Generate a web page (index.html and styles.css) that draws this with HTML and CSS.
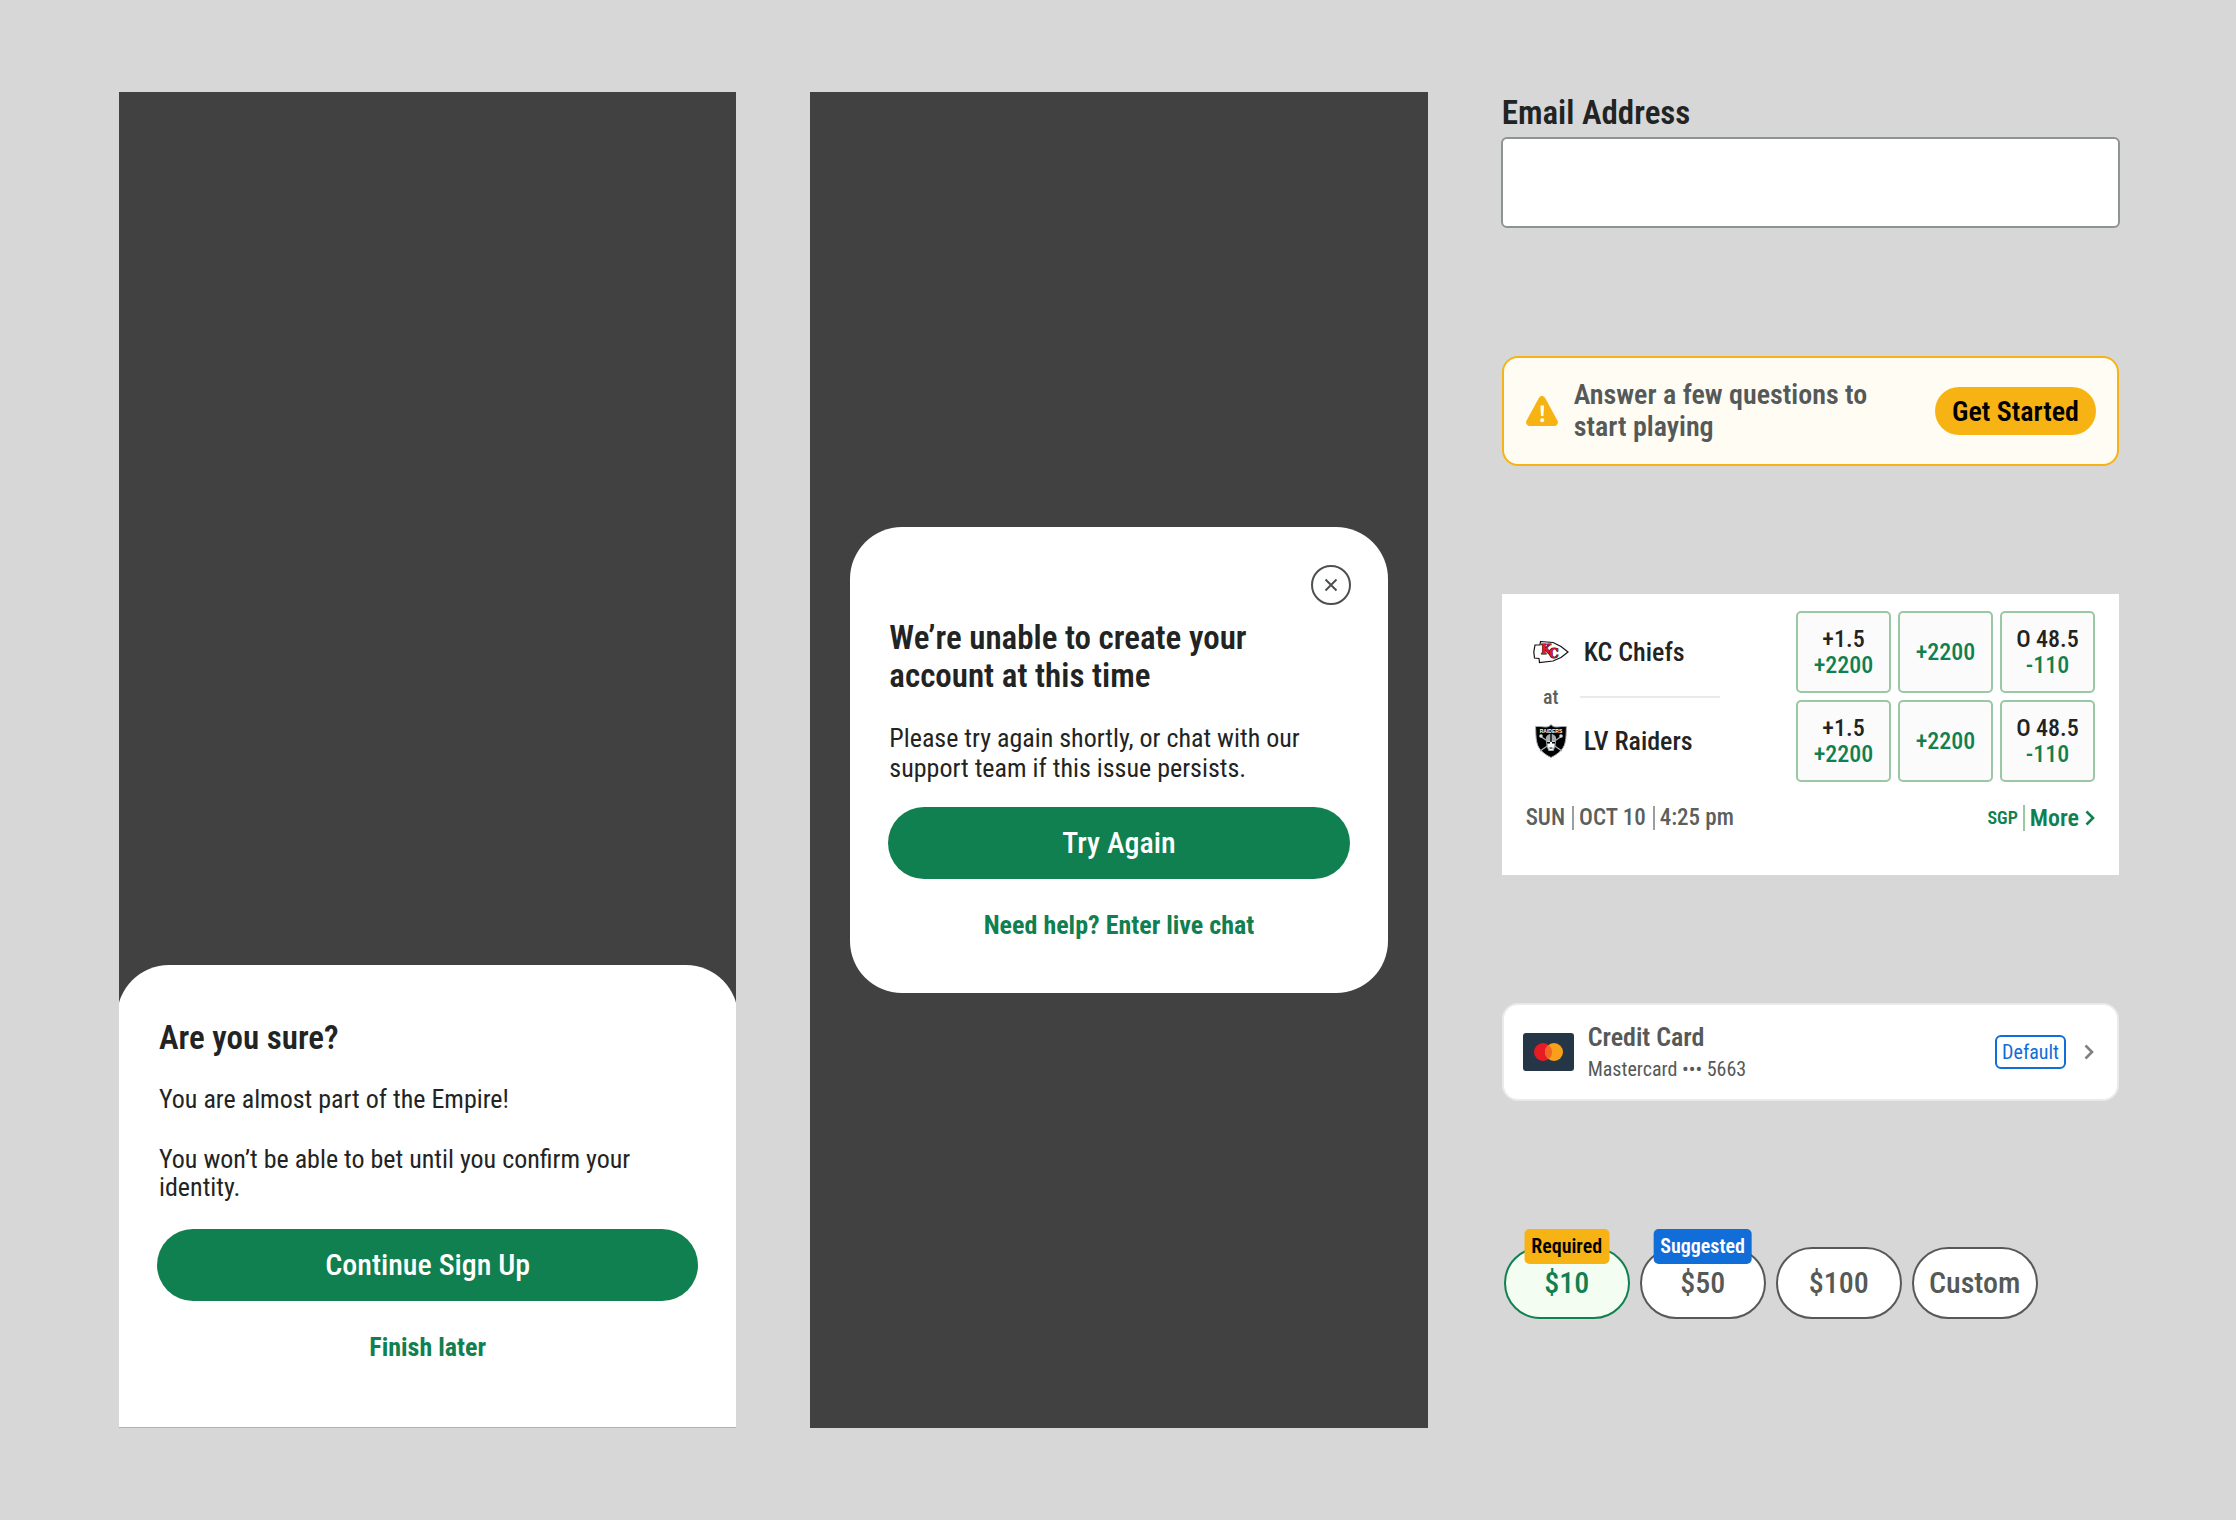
FILE: index.html
```html
<!DOCTYPE html>
<html lang="en">
<head>
  <meta charset="UTF-8">
  <meta name="viewport" content="width=device-width, initial-scale=1.0">
  <title>Sportsbook Components</title>
  <link rel="stylesheet" href="styles.css">
</head>
<body>
  <main class="board">

    <!-- Bottom sheet -->
    <section class="screen screen-bottom">
      <div class="sheet">
        <h2 class="title">Are you sure?</h2>
        <p>You are almost part of the Empire!</p>
        <p>You won’t be able to bet until you confirm your identity.</p>
        <button type="button" class="button">Continue Sign Up</button>
        <a href="#" class="text-link">Finish later</a>
      </div>
    </section>

    <!-- Modal -->
    <section class="screen screen-center">
      <div class="modal">
        <button type="button" class="close-btn" aria-label="Close">
          <svg width="14" height="14" viewBox="0 0 14 14" fill="none" stroke="#4c504e" stroke-width="2">
            <path d="M1.5 1.5l11 11M12.5 1.5l-11 11"/>
          </svg>
        </button>
        <h2 class="title">We’re unable to create your account at this time</h2>
        <p>Please try again shortly, or chat with our support team if this issue persists.</p>
        <button type="button" class="button">Try Again</button>
        <a href="#" class="text-link">Need help? Enter live chat</a>
      </div>
    </section>

    <!-- Components -->
    <section class="components">
      <div class="field">
        <label for="email" class="title">Email Address</label>
        <input type="email" id="email">
      </div>

      <div class="alert">
        <svg width="32" height="30" viewBox="0 0 32 30">
          <path d="M13 1.8c1.4-2.4 4.6-2.4 6 0l12.400 22.600c1.300 2.400-.2 5.600-3 5.600H3.600c-2.800 0-4.300-3.200-3-5.600z" fill="#f7b314"/>
          <path d="M14.400 9.500h3.600l-.6 10.500h-2.400z" fill="#fff"/>
          <circle cx="16.200" cy="24.200" r="2" fill="#fff"/>
        </svg>
        <p>Answer a few questions to start playing</p>
        <button type="button" class="alert-btn">Get Started</button>
      </div>

      <div class="game">
        <div class="game-main">
          <div class="teams">
            <svg class="logo" width="36" height="24" viewBox="0 0 36 24">
              <path d="M7.500 1.500L20 2.500 28 6.500 35 12 28 17.500 20 21 6.500 22.500 6 18.500 1.500 18 .8 12 2 5 7 5z" fill="#fff" stroke="#111" stroke-width="1.200"/>
              <text x="8" y="14" class="kc kc-back">K</text>
              <text x="8" y="14" class="kc">K</text>
              <text x="16" y="18" class="kc kc-back">C</text>
              <text x="16" y="18" class="kc">C</text>
            </svg>
            <span class="team">KC Chiefs</span>
            <span class="at">at</span>
            <span class="rule"></span>
            <svg class="logo" width="32" height="34" viewBox="0 0 32 34">
              <path d="M16 .5c1 1.600 3 2.500 5 2.500 3 0 6-.8 10.500-.5C31 8 31.500 13 30 19c-1.500 6.500-7 11-14 14.500C9 30 3.500 25.500 2 19 .5 13 1 8 .5 2.500 5 2.200 8 3 11 3c2 0 4-.9 5-2.500z" fill="#000" stroke="#a5acaf" stroke-width="1"/>
              <text x="16" y="9" class="raiders">RAIDERS</text>
              <path d="M5 12l22 15M27 12L5 27" stroke="#a5acaf" stroke-width="1.400"/>
              <circle cx="6" cy="12" r="1.800" fill="#d8dcde"/>
              <circle cx="26" cy="12" r="1.800" fill="#d8dcde"/>
              <path d="M11 17c-1-5 2-7 5-7s6 2 5 7l-.5 5-2 5h-5l-2-5z" fill="#a5acaf"/>
              <path d="M12.500 17.500h7l-.5 5-1.500 3.500h-3L13 22.500z" fill="#fff"/>
              <path d="M15.300 10h1.400v8h-1.400zM12 18h3v1.600h-3zM17 18h3v1.600h-3zM14.500 23.500h3v.9h-3z" fill="#000"/>
            </svg>
            <span class="team">LV Raiders</span>
          </div>
          <div class="odds">
            <button type="button" class="odd"><span>+1.5</span>+2200</button>
            <button type="button" class="odd">+2200</button>
            <button type="button" class="odd"><span>O 48.5</span>-110</button>
            <button type="button" class="odd"><span>+1.5</span>+2200</button>
            <button type="button" class="odd">+2200</button>
            <button type="button" class="odd"><span>O 48.5</span>-110</button>
          </div>
        </div>
        <div class="game-footer">
          <div class="date">
            <span>SUN</span>
            <span>OCT 10</span>
            <span>4:25 pm</span>
          </div>
          <a href="#" class="more">
            <span class="sgp">SGP</span>
            <span class="more-text">More</span>
            <svg width="10" height="16" viewBox="0 0 10 16" fill="none" stroke="#118050" stroke-width="2.600">
              <path d="M1.500 1.500L8 8l-6.500 6.500"/>
            </svg>
          </a>
        </div>
      </div>

      <a href="#" class="payment">
        <svg width="51" height="38" viewBox="0 0 51 38">
          <rect width="51" height="38" rx="3" fill="#253747"/>
          <circle cx="20" cy="19" r="9" fill="#e71b23"/>
          <circle cx="31" cy="19" r="9" fill="#f99f1b"/>
          <path d="M25.500 11.900a9 9 0 0 1 0 14.200a9 9 0 0 1 0-14.200z" fill="#f26522"/>
        </svg>
        <span class="payment-info">
          <span class="payment-name">Credit Card</span>
          <span class="payment-number">Mastercard ••• 5663</span>
        </span>
        <span class="tag">Default</span>
        <svg width="10" height="16" viewBox="0 0 10 16" fill="none" stroke="#7d8180" stroke-width="2.600">
          <path d="M1.500 1.500L8 8l-6.500 6.500"/>
        </svg>
      </a>

      <div class="amounts">
        <button type="button" class="amount selected"><span class="badge badge-required">Required</span>$10</button>
        <button type="button" class="amount"><span class="badge badge-suggested">Suggested</span>$50</button>
        <button type="button" class="amount">$100</button>
        <button type="button" class="amount">Custom</button>
      </div>
    </section>

  </main>
</body>
</html>
```
FILE: styles.css
```css
/* General Styles */
* {
  box-sizing: border-box;
}

body {
  font-family: 'Roboto Condensed', 'Liberation Sans Narrow', 'Roboto', sans-serif;
  font-size: 26px;
  margin: 0;
  background-color: #d7d7d7;
  color: #222423;
}

h2,
p {
  margin: 0;
}

button {
  font-family: inherit;
  cursor: pointer;
}

a {
  text-decoration: none;
}

.board {
  display: grid;
  grid-template-columns: repeat(3, 1fr);
  gap: 74px;
  min-height: 100vh;
  padding: 92px 117px 92px 119px;
}

.title {
  font-size: 33px;
  font-weight: 600;
  line-height: 38px;
}

.button {
  height: 72px;
  margin: 0 -2px;
  padding: 0 0 2px;
  border: none;
  border-radius: 36px;
  background-color: #118050;
  color: #fff;
  font-size: 30px;
  font-weight: 500;
}

.text-link {
  margin-top: 31px;
  color: #118050;
  font-weight: 700;
  line-height: 30px;
  text-align: center;
}

/* Screens */
.screen {
  display: flex;
  background-color: #414141;
  overflow: hidden;
}

.screen-bottom {
  align-items: flex-end;
}

.screen-center {
  align-items: center;
  padding: 0 40px;
}

.sheet {
  display: flex;
  flex: 1;
  flex-direction: column;
  margin: 0 -2px;
  padding: 54px 42px 65px;
  border-bottom: 1px solid #b0b0b0;
  border-radius: 52px 52px 0 0;
  background-color: #fff;
}

.sheet .title,
.sheet p {
  margin-bottom: 28px;
}

.sheet .title + p {
  margin-bottom: 32px;
}

.sheet p {
  line-height: 28px;
}

.modal {
  display: flex;
  flex: 1;
  flex-direction: column;
  padding: 38px 39px 53px;
  border-radius: 52px;
  background-color: #fff;
}

.modal .title {
  margin-bottom: 28px;
  padding-right: 60px;
}

.modal p {
  margin-bottom: 24px;
  line-height: 30px;
}

.modal .button {
  margin: 0 -1px;
}

.close-btn {
  display: flex;
  align-items: center;
  justify-content: center;
  align-self: flex-end;
  width: 40px;
  height: 40px;
  margin: 0 -2px 14px 0;
  padding: 0;
  border: 2px solid #4c504e;
  border-radius: 50%;
  background: none;
}

/* Components */
.components {
  display: flex;
  flex-direction: column;
  gap: 128px;
}

.field {
  display: flex;
  flex-direction: column;
  gap: 4px;
}

.field .title {
  line-height: 41px;
}

.field input {
  height: 91px;
  margin: 0 -1px;
  padding: 0 20px;
  border: 2px solid #8e9492;
  border-radius: 6px;
  background-color: #fff;
  font-family: inherit;
  font-size: 26px;
}

.alert {
  display: flex;
  align-items: center;
  height: 110px;
  padding: 0 21px 0 22px;
  border: 2px solid #f7b314;
  border-radius: 16px;
  background-color: #fffcf3;
  color: #555958;
  font-size: 28px;
  font-weight: 600;
  line-height: 32px;
}

.alert p {
  flex: 1;
  padding: 0 60px 0 16px;
}

.alert-btn {
  height: 48px;
  padding: 0 17px;
  border: none;
  border-radius: 24px;
  background-color: #f7b314;
  color: #000;
  font-size: 28px;
  font-weight: 600;
}

/* Game */
.game {
  height: 281px;
  padding: 17px 24px;
  background-color: #fff;
}

.game-main {
  display: flex;
  justify-content: space-between;
}

.teams {
  display: grid;
  grid-template-columns: 50px 145px;
  grid-template-rows: 82px 7px 82px;
  align-items: center;
  column-gap: 4px;
}

.logo {
  justify-self: center;
}

.kc {
  fill: #e31837;
  font: bold 12px 'DejaVu Serif', serif;
}

.kc-back {
  stroke: #111;
  stroke-width: 1px;
}

.raiders {
  fill: #fff;
  font: bold 5px 'Liberation Sans', sans-serif;
  text-anchor: middle;
}

.team {
  padding-left: 4px;
  font-weight: 500;
}

.at {
  justify-self: center;
  color: #5b5f5d;
  font-size: 20px;
  font-weight: 500;
}

.rule {
  height: 2px;
  margin-right: 5px;
  background-color: #e9eaea;
}

.odds {
  display: grid;
  grid-template-columns: repeat(3, 95px);
  grid-auto-rows: 82px;
  gap: 7px;
}

.odd {
  padding: 0;
  border: 2px solid #9ac8a4;
  border-radius: 5px;
  background-color: #fbfbfb;
  color: #118050;
  font-size: 24px;
  font-weight: 500;
  line-height: 26px;
}

.odd span {
  display: block;
  color: #222423;
}

.game-footer {
  display: flex;
  align-items: center;
  justify-content: space-between;
  padding-top: 23px;
  font-size: 24px;
  font-weight: 500;
}

.date {
  display: flex;
  color: #5b5f5d;
  font-size: 23px;
  line-height: 24px;
}

.date span + span {
  margin-left: 7px;
  padding-left: 5px;
  border-left: 2px solid #9b9f9d;
}

.more {
  display: flex;
  align-items: center;
  color: #118050;
  font-weight: 600;
  line-height: 26px;
}

.sgp {
  padding-right: 5px;
  font-size: 18px;
}

.more-text {
  margin-right: 6px;
  padding-left: 5px;
  border-left: 2px solid #9ac8a4;
}

/* Payment */
.payment {
  display: flex;
  align-items: center;
  height: 98px;
  padding: 0 23px 0 19px;
  border: 2px solid #e9eaea;
  border-radius: 16px;
  background-color: #fff;
  color: #555958;
}

.payment-info {
  display: flex;
  flex: 1;
  flex-direction: column;
  padding-left: 14px;
}

.payment-name {
  font-weight: 600;
  line-height: 34px;
}

.payment-number {
  font-size: 20px;
  line-height: 30px;
}

.tag {
  margin-right: 18px;
  padding: 0 5px;
  border: 2px solid #116dd8;
  border-radius: 6px;
  color: #116dd8;
  font-size: 20px;
  line-height: 30px;
}

/* Amounts */
.amounts {
  display: flex;
  gap: 10px;
  padding: 18px 0 0 2px;
}

.amount {
  position: relative;
  width: 126px;
  height: 72px;
  padding: 0 0 2px;
  border: 2px solid #555958;
  border-radius: 36px;
  background-color: #fff;
  color: #555958;
  font-size: 30px;
  font-weight: 500;
}

.amount.selected {
  border-color: #118050;
  background-color: #f4fdf2;
  color: #118050;
}

/* Sits over the top edge of the pill */
.badge {
  position: absolute;
  top: -20px;
  left: 50%;
  padding: 0 7px;
  border-radius: 5px;
  font-size: 20px;
  font-weight: 600;
  line-height: 35px;
  transform: translateX(-50%);
}

.badge-required {
  background-color: #f7b314;
  color: #000;
}

.badge-suggested {
  background-color: #116dd8;
  color: #fff;
}
```
